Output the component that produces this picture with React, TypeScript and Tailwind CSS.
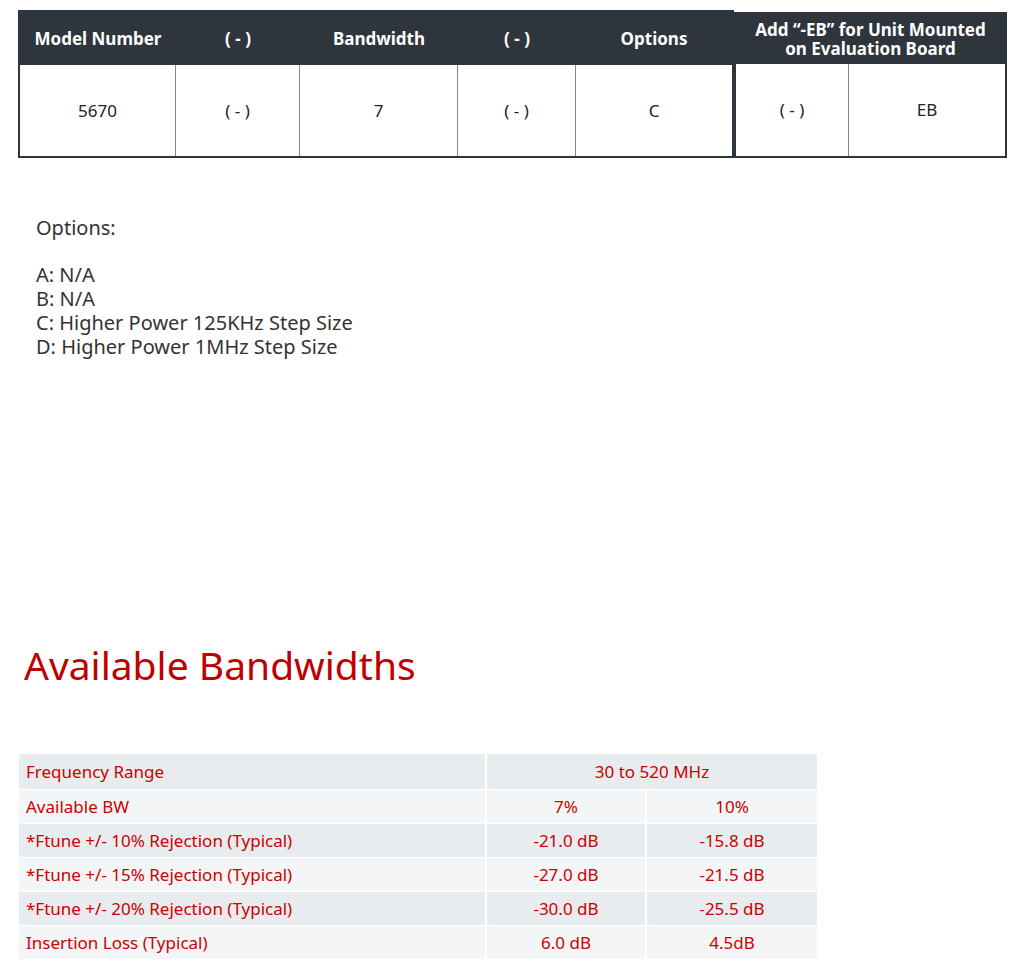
export default function App() {
  const rows = [
    ["Available BW", "7%", "10%"],
    ["*Ftune +/- 10% Rejection (Typical)", "-21.0 dB", "-15.8 dB"],
    ["*Ftune +/- 15% Rejection (Typical)", "-27.0 dB", "-21.5 dB"],
    ["*Ftune +/- 20% Rejection (Typical)", "-30.0 dB", "-25.5 dB"],
    ["Insertion Loss (Typical)", "6.0 dB", "4.5dB"],
  ];
  const bg = (i: number) => (i % 2 === 0 ? "bg-[#e8ecef]" : "bg-[#f4f5f6]");
  return (
    <div className="w-[1024px] h-[975px] bg-white relative font-['Liberation_Sans',Arial,sans-serif]">
      <div className="flex pt-[10px] pl-[18px]">
        <div className="w-[716px] h-[148px] border-2 border-[#2f353d] flex flex-col">
          <div className="h-[53px] bg-[#2f353d] text-white font-bold text-[17px] flex items-center">
            <div className="w-[156px] text-center">Model Number</div>
            <div className="w-[124px] text-center">( - )</div>
            <div className="w-[158px] text-center">Bandwidth</div>
            <div className="w-[118px] text-center">( - )</div>
            <div className="flex-1 text-center">Options</div>
          </div>
          <div className="flex-1 flex text-[17px] text-[#222]">
            <div className="w-[156px] flex items-center justify-center border-r border-[#888]">5670</div>
            <div className="w-[124px] flex items-center justify-center border-r border-[#888]">( - )</div>
            <div className="w-[158px] flex items-center justify-center border-r border-[#888]">7</div>
            <div className="w-[118px] flex items-center justify-center border-r border-[#888]">( - )</div>
            <div className="flex-1 flex items-center justify-center">C</div>
          </div>
        </div>
        <div className="w-[273px] h-[146px] mt-[2px] border-2 border-[#2f353d] flex flex-col">
          <div className="h-[50px] bg-[#2f353d] text-white font-bold text-[17px] leading-[19px] flex items-center justify-center text-center">
            Add “-EB” for Unit Mounted<br />on Evaluation Board
          </div>
          <div className="flex-1 flex text-[17px] text-[#222]">
            <div className="w-[113px] flex items-center justify-center border-r border-[#888]">( - )</div>
            <div className="flex-1 flex items-center justify-center">EB</div>
          </div>
        </div>
      </div>
      <div className="pl-[36px] pt-[58px] text-[20px] leading-[24px] text-[#333]">
        <div>Options:</div>
        <div className="mt-[23px]">A: N/A</div>
        <div>B: N/A</div>
        <div>C: Higher Power 125KHz Step Size</div>
        <div>D: Higher Power 1MHz Step Size</div>
      </div>
      <div className="pl-[24px] mt-[282px] text-[39px] leading-[48px] text-[#c00000]">Available Bandwidths</div>
      <div className="ml-[19px] mt-[65px] w-[798px] flex flex-col gap-[1px] text-[17px] text-[#cc0000]">
        <div className="flex h-[35px] gap-[2px]">
          <div className="w-[466px] bg-[#e8ecef] flex items-center pl-[7px]">Frequency Range</div>
          <div className="flex-1 bg-[#e8ecef] flex items-center justify-center">30 to 520 MHz</div>
        </div>
        {rows.map((r, i) => (
          <div key={i} className="flex h-[33px] gap-[2px]">
            <div className={`w-[466px] ${bg(i + 1)} flex items-center pl-[7px]`}>{r[0]}</div>
            <div className={`w-[158px] ${bg(i + 1)} flex items-center justify-center`}>{r[1]}</div>
            <div className={`flex-1 ${bg(i + 1)} flex items-center justify-center`}>{r[2]}</div>
          </div>
        ))}
      </div>
    </div>
  );
}
